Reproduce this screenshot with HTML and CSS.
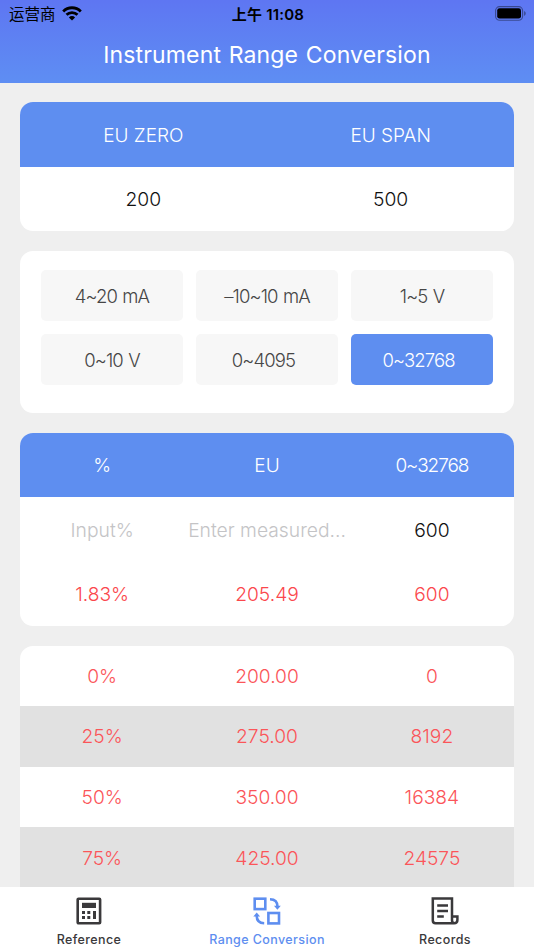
FILE: index.html
```html
<!DOCTYPE html>
<html lang="en">
<head>
  <meta charset="UTF-8">
  <meta name="viewport" content="width=device-width, initial-scale=1.0">
  <title>Instrument Range Conversion</title>
  <link rel="stylesheet" href="styles.css">
</head>
<body>

<header>
  <div class="status">
    <div class="carrier">
      <span>运营商</span>
      <svg width="20" height="15" viewBox="0 0 20 15" fill="none" stroke="#000" stroke-width="2.8">
        <path d="M1.2 5.4a12.4 12.4 0 0 1 17.6 0"/>
        <path d="M4.5 8.8a7.8 7.8 0 0 1 11 0"/>
        <path d="M10 14.6l-3.1-3.2a4.4 4.4 0 0 1 6.2 0z" fill="#000" stroke="none"/>
      </svg>
    </div>
    <div class="time">上午 11:08</div>
    <div class="battery">
      <svg width="32" height="15" viewBox="0 0 32 15">
        <rect x="0.6" y="0.6" width="27" height="13.6" rx="4" fill="none" stroke="#000" stroke-opacity="0.4" stroke-width="1.1"/>
        <rect x="2.2" y="2.2" width="23.8" height="10.4" rx="2.4"/>
        <path d="M29.2 5c1.9.8 1.9 4 0 4.8z" fill-opacity="0.45"/>
      </svg>
    </div>
  </div>
  <h1>Instrument Range Conversion</h1>
</header>

<main>
  <section class="card">
    <div class="row two head"><span>EU ZERO</span><span>EU SPAN</span></div>
    <div class="row two value"><span>200</span><span>500</span></div>
  </section>

  <section class="card ranges">
    <button>4~20 mA</button>
    <button>–10~10 mA</button>
    <button>1~5 V</button>
    <button>0~10 V</button>
    <button class="unitless">0~4095</button>
    <button class="unitless active">0~32768</button>
  </section>

  <section class="card">
    <div class="row head"><span>%</span><span>EU</span><span class="narrow">0~32768</span></div>
    <div class="row value"><span class="placeholder">Input%</span><span class="placeholder">Enter measured...</span><span>600</span></div>
    <div class="row result"><span>1.83%</span><span>205.49</span><span>600</span></div>
  </section>

  <section class="card table">
    <div class="row"><span>0%</span><span>200.00</span><span>0</span></div>
    <div class="row"><span>25%</span><span>275.00</span><span>8192</span></div>
    <div class="row"><span>50%</span><span>350.00</span><span>16384</span></div>
    <div class="row"><span>75%</span><span>425.00</span><span>24575</span></div>
  </section>
</main>

<nav>
  <a href="#reference">
    <svg width="28" height="28" viewBox="0 0 28 28" fill="#3a393b">
      <rect x="2.7" y="1.7" width="22.4" height="24.6" rx="0.8" fill="none" stroke="#3a393b" stroke-width="2.6"/>
      <rect x="7" y="5.8" width="14" height="5.2"/>
      <rect x="7" y="14" width="3" height="3"/>
      <rect x="12.3" y="14" width="3" height="3"/>
      <rect x="7" y="19" width="3" height="3"/>
      <rect x="12.3" y="19" width="3" height="3"/>
      <rect x="18" y="14" width="3" height="8"/>
    </svg>
    <span>Reference</span>
  </a>
  <a href="#conversion" class="active">
    <svg width="28" height="28" viewBox="0 0 28 28" fill="none" stroke="#5e8ef0" stroke-width="2.6">
      <rect x="1.7" y="1.7" width="10.6" height="10.4"/>
      <rect x="15.4" y="16" width="10.6" height="10.4"/>
      <path d="M17 2.3c5 .1 7.5 2.8 7.5 7.5"/>
      <path d="M21 8.7h6.8l-3.4 4z" fill="#5e8ef0" stroke="none"/>
      <path d="M11.2 26.2c-5-.1-7.5-2.8-7.5-7.5"/>
      <path d="M.3 19.6h6.8l-3.4-4z" fill="#5e8ef0" stroke="none"/>
    </svg>
    <span>Range Conversion</span>
  </a>
  <a href="#records">
    <svg width="28" height="28" viewBox="0 0 28 28" fill="none" stroke="#3a393b" stroke-width="2.5">
      <path d="M21 19.5V1.6H1.8v22q0 2.7 2.7 2.7h18.7q3.2 0 3.2-3.2v-3.6H21v3.8q0 2.8 2.4 2.9"/>
      <path d="M6.2 8.6H17M6.2 14H17M6.2 19.5h6.6"/>
    </svg>
    <span>Records</span>
  </a>
</nav>

</body>
</html>
```
FILE: styles.css
```css
* { box-sizing: border-box; }
body { font-family: Inter, "Noto Sans CJK SC", sans-serif; margin: 0; height: 950px; overflow: hidden; display: flex; flex-direction: column; background: #efefef; }

header { height: 82.5px; flex: none; background: linear-gradient(#5e76f2, #5e8ef3); color: white; }
.status { display: grid; grid-template-columns: 1fr 1fr 1fr; align-items: center; height: 28px; padding: 0 7px 0 9px; color: #000; font-size: 15.5px; line-height: 28px; }
.carrier { display: flex; align-items: center; gap: 6px; font-weight: 400; }
.carrier span { padding-top: 1px; }
.carrier svg { margin-top: -3px; }
.time { text-align: center; font-weight: 600; font-size: 15px; white-space: nowrap; letter-spacing: 0.2px; }
.battery { display: flex; justify-content: flex-end; margin-top: -2px; }
h1 { margin: 9px 0 0; font-size: 23px; line-height: 36px; font-weight: 400; text-align: center; letter-spacing: 0.15px; word-spacing: 1px; }

main { flex: 1; min-height: 0; overflow: hidden; padding: 19.5px 19.7px 0; display: flex; flex-direction: column; gap: 19.5px; }
.card { flex: none; background: #fff; border-radius: 13px; overflow: hidden; }
.row { display: grid; grid-template-columns: repeat(3, 1fr); height: 64.5px; padding-top: 1px; align-items: center; text-align: center; font-size: 19.5px; font-weight: 300; white-space: nowrap; }
.two { grid-template-columns: 1fr 1fr; }
.head { background: #5e8ef0; color: #fff; font-size: 19px; }
.two.head { padding-top: 2px; }
.narrow { letter-spacing: -1.1px; }
.value { color: #111; font-size: 19.3px; }
.placeholder { color: #c4c4c6; }
.result { color: #fb474c; font-weight: 350; font-size: 19.2px; }

.ranges { display: grid; grid-template-columns: repeat(3, 1fr); grid-auto-rows: 51px; gap: 13px; height: 162.5px; padding: 19.5px 21.3px; }
.ranges button { border: none; border-radius: 5px; padding: 0; background: #f7f7f7; color: #464646; font-family: inherit; font-size: 18.5px; font-weight: 300; letter-spacing: -0.9px; word-spacing: 1px; }
.ranges .unitless { padding-right: 7px; }
.ranges .active { background: #5e8ef0; color: #fff; }

.table { border-radius: 13px 13px 0 0; }
.table .row { height: 60.6px; padding-top: 0; color: #fb5559; font-size: 19.2px; }
.table .row:nth-child(even) { background: #e1e1e1; }

nav { flex: none; height: 63.5px; display: grid; grid-template-columns: repeat(3, 1fr); background: #fff; }
nav a { display: flex; flex-direction: column; align-items: center; padding-top: 10px; color: #3a393b; text-decoration: none; font-size: 12.5px; line-height: 18px; font-weight: 500; letter-spacing: 0.4px; }
nav span { margin-top: 6.5px; }
nav .active { color: #5e8ef0; }
```
